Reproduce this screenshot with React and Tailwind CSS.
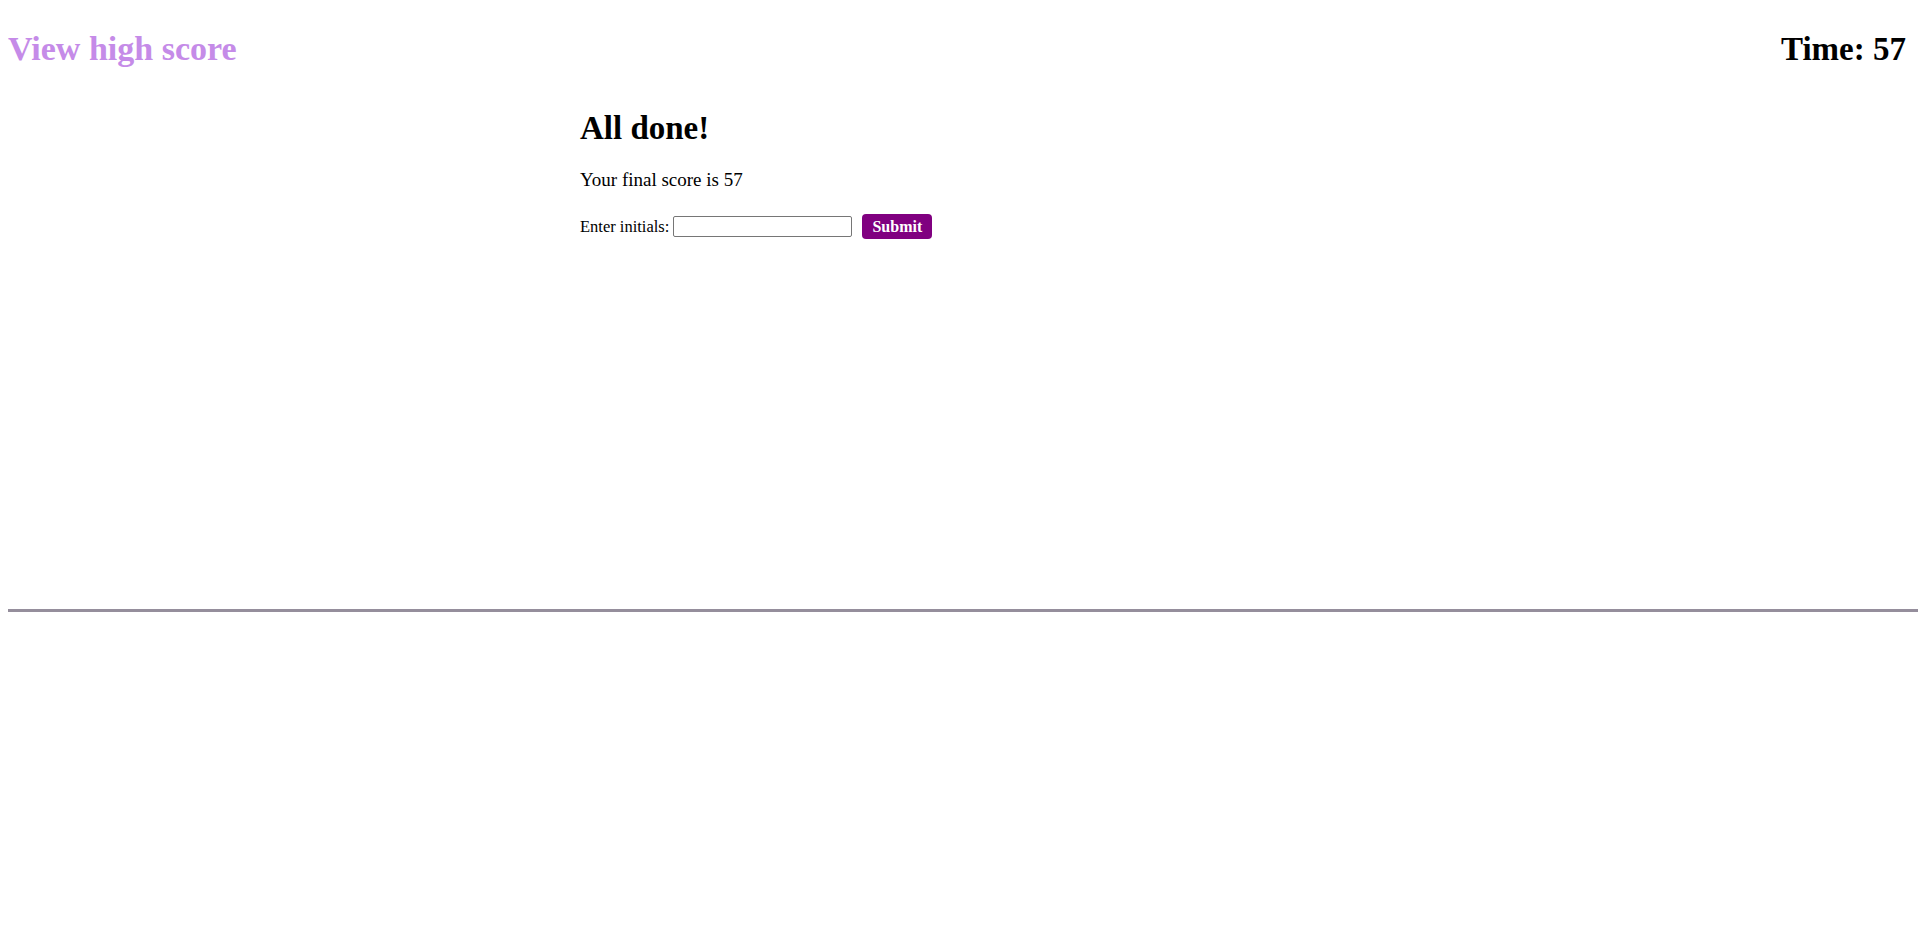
export default function App() {
  return (
    <div className="min-h-[930px] bg-white text-black" style={{ fontFamily: '"Liberation Serif", serif' }}>
      <header className="flex items-start justify-between px-2 pt-[29px]">
        <a className="text-[34px] font-bold leading-[40px] text-[#c58be8]">View high score</a>
        <div className="text-[33px] font-bold leading-[40px] pr-1">Time: 57</div>
      </header>
      <main className="ml-[580px] mt-[41px] h-[499px]">
        <h2 className="text-[33px] font-bold leading-[36px]">All done!</h2>
        <p className="mt-[22px] text-[19px] leading-[24px]">Your final score is 57</p>
        <div className="mt-[22px] flex items-center text-[16.5px] leading-[25px]">
          <span>Enter initials:</span>
          <input className="ml-1 h-[21px] w-[179px] border border-[#767676] rounded-[2px]" />
          <button className="ml-[10px] h-[25px] w-[70px] rounded-[4px] bg-[#800080] text-white text-[16px] font-bold">Submit</button>
        </div>
      </main>
      <hr className="ml-2 border-0 h-[3px] bg-[#958e9c]" />
    </div>
  );
}
